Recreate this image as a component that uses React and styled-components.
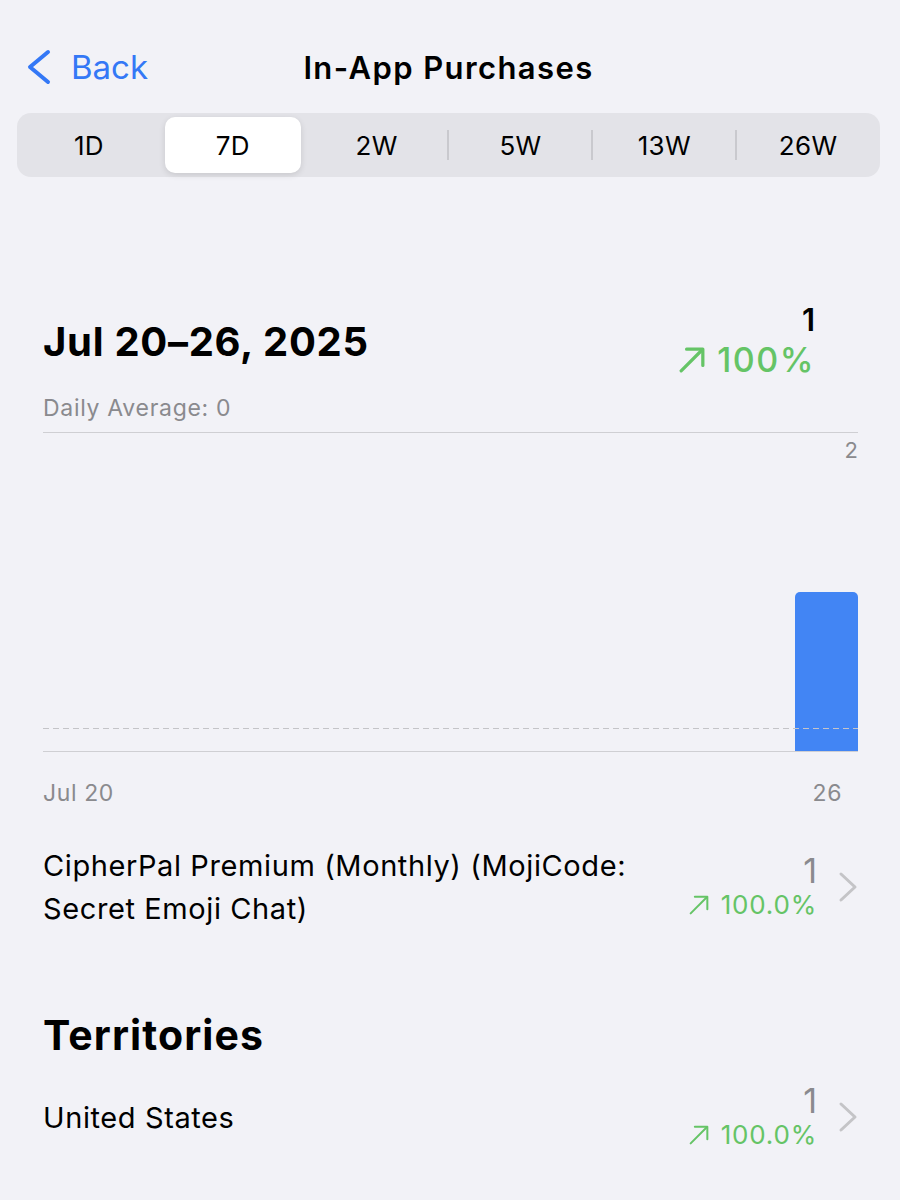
import React from 'react';
import styled, { createGlobalStyle } from 'styled-components';

const GlobalStyle = createGlobalStyle`
  * {
    margin: 0;
    padding: 0;
    box-sizing: border-box;
  }
  body {
    background: #f2f2f7;
    font-family: Inter, "Noto Sans", sans-serif;
    color: #000;
  }
`;

const Page = styled.div`
  width: 900px;
  height: 1200px;
  overflow: hidden;
  padding: 0 20px 0 17px;
`;

const NavBar = styled.header`
  position: relative;
  height: 113px;
  display: flex;
  align-items: center;
  justify-content: center;
  padding-top: 21px;
`;

const BackButton = styled.a`
  position: absolute;
  left: 10px;
  top: 47px;
  display: flex;
  align-items: center;
  gap: 20px;
  color: #3478f6;
  font-size: 33px;
  text-decoration: none;
`;

const Title = styled.h1`
  font-size: 31px;
  font-weight: 600;
  letter-spacing: 1.4px;
`;

const Segmented = styled.div`
  display: grid;
  grid-template-columns: repeat(6, 1fr);
  height: 64px;
  padding: 4px 0;
  border-radius: 14px;
  background: #e3e3e8;
`;

const Segment = styled.div`
  position: relative;
  display: flex;
  align-items: center;
  justify-content: center;
  margin: 0 4px;
  font-size: 26px;
  letter-spacing: 0.3px;
  border-radius: 10px;
  background: ${(p) => (p.active ? '#fff' : 'transparent')};
  box-shadow: ${(p) => (p.active ? '0 2px 6px rgba(0,0,0,0.12)' : 'none')};

  &::before {
    content: '';
    display: ${(p) => (p.divider ? 'block' : 'none')};
    position: absolute;
    left: -5px;
    top: 13px;
    bottom: 13px;
    width: 2px;
    background: #c9c9ce;
  }
`;

const Content = styled.main`
  padding: 0 22px 0 26px;
`;

const Summary = styled.section`
  display: flex;
  justify-content: space-between;
  align-items: center;
  margin-top: 124px;
  padding-right: 43px;
`;

const DateRange = styled.h2`
  font-size: 40px;
  font-weight: 700;
  letter-spacing: 0.7px;
`;

const Totals = styled.div`
  display: flex;
  flex-direction: column;
  align-items: flex-end;
`;

const BigCount = styled.div`
  font-size: 31px;
  font-weight: 600;
  line-height: 38px;
`;

const Change = styled.div`
  display: flex;
  align-items: center;
  gap: 12px;
  color: #65c466;
  font-size: ${(p) => (p.big ? 34 : 26)}px;
  font-weight: ${(p) => (p.big ? 500 : 400)};
  letter-spacing: ${(p) => (p.big ? 1.5 : 0.8)}px;
  line-height: ${(p) => (p.big ? 42 : 32)}px;
`;

const Average = styled.div`
  margin-top: 12px;
  font-size: 23px;
  letter-spacing: 0.7px;
  color: #8a8a8e;
  line-height: 30px;
`;

const Chart = styled.div`
  position: relative;
  margin-top: 9px;
  height: 320px;
  border-top: 1.5px solid #cfcfd3;
  border-bottom: 1.5px solid #cfcfd3;
  display: grid;
  grid-template-columns: repeat(7, 1fr);
  align-items: end;
`;

const MaxLabel = styled.span`
  position: absolute;
  right: 0;
  top: 4px;
  font-size: 22px;
  color: #8a8a8e;
`;

const AvgLine = styled.div`
  position: absolute;
  left: 0;
  right: 0;
  bottom: 22px;
  height: 1px;
  background: repeating-linear-gradient(90deg, #c4c4c8 0 6px, transparent 6px 10px);
  z-index: 1;
`;

const Bar = styled.div`
  justify-self: end;
  width: 63px;
  background: #4285f4;
  border-radius: 5px 5px 0 0;
`;

const AxisLabels = styled.div`
  display: flex;
  justify-content: space-between;
  padding-right: 16px;
  margin-top: 27px;
  font-size: 23px;
  letter-spacing: 0.6px;
  color: #8a8a8e;
`;

const Row = styled.div`
  display: flex;
  align-items: center;
  gap: 24px;
  margin-top: ${(p) => p.top}px;
`;

const RowTitle = styled.div`
  flex: 1;
  font-size: 29px;
  letter-spacing: 0.6px;
  line-height: 43px;
  padding-right: 20px;
`;

const RowValues = styled.div`
  display: flex;
  flex-direction: column;
  align-items: flex-end;
  margin-right: -3px;
`;

const RowCount = styled.div`
  font-size: 34px;
  line-height: 36px;
  color: #8a8a8e;
`;

const SectionTitle = styled.h2`
  margin-top: 80px;
  font-size: 41px;
  font-weight: 700;
  letter-spacing: 1.1px;
`;

const ArrowIcon = ({ size, weight }) => (
  <svg width={size} height={size} viewBox="0 0 24 24" fill="none" stroke="currentColor" strokeWidth={weight} strokeLinecap="round" strokeLinejoin="round">
    <path d="M2 22 21 3" />
    <path d="M7 2h15v15" />
  </svg>
);

const Chevron = ({ w, h, color, weight }) => (
  <svg width={w} height={h} viewBox={`0 0 ${w} ${h}`} fill="none" stroke={color} strokeWidth={weight} strokeLinecap="round" strokeLinejoin="round">
    <path d={`M${w - 3} 3 L3 ${h / 2} L${w - 3} ${h - 3}`} />
  </svg>
);

const ChevronRight = () => (
  <svg width="20" height="32" viewBox="0 0 20 32" fill="none" stroke="#c4c4c7" strokeWidth="3" strokeLinecap="round" strokeLinejoin="round">
    <path d="M3 3 L17 16 L3 29" />
  </svg>
);

const segments = ['1D', '7D', '2W', '5W', '13W', '26W'];
const activeIndex = 1;
const days = [0, 0, 0, 0, 0, 0, 1];

function App() {
  return (
    <Page>
      <GlobalStyle />
      <NavBar>
        <BackButton href="#back">
          <Chevron w={24} h={36} color="#3478f6" weight={4} />
          <span>Back</span>
        </BackButton>
        <Title>In-App Purchases</Title>
      </NavBar>

      <Segmented>
        {segments.map((s, i) => (
          <Segment
            key={s}
            active={i === activeIndex}
            divider={i > 0 && i !== activeIndex && i - 1 !== activeIndex}
          >
            {s}
          </Segment>
        ))}
      </Segmented>

      <Content>
        <Summary>
          <DateRange>Jul 20–26, 2025</DateRange>
          <Totals>
            <BigCount>1</BigCount>
            <Change big>
              <ArrowIcon size={26} weight={3} />
              100%
            </Change>
          </Totals>
        </Summary>
        <Average>Daily Average: 0</Average>

        <Chart>
          <MaxLabel>2</MaxLabel>
          <AvgLine />
          {days.map((v, i) => (
            <Bar key={i} style={{ height: `${(v / 2) * 100}%` }} />
          ))}
        </Chart>
        <AxisLabels>
          <span>Jul 20</span>
          <span>26</span>
        </AxisLabels>

        <Row top={37}>
          <RowTitle>CipherPal Premium (Monthly) (MojiCode: Secret Emoji Chat)</RowTitle>
          <RowValues>
            <RowCount>1</RowCount>
            <Change>
              <ArrowIcon size={20} weight={2.4} />
              100.0%
            </Change>
          </RowValues>
          <ChevronRight />
        </Row>

        <SectionTitle>Territories</SectionTitle>

        <Row top={23}>
          <RowTitle>United States</RowTitle>
          <RowValues>
            <RowCount>1</RowCount>
            <Change>
              <ArrowIcon size={20} weight={2.4} />
              100.0%
            </Change>
          </RowValues>
          <ChevronRight />
        </Row>
      </Content>
    </Page>
  );
}

export default App;
